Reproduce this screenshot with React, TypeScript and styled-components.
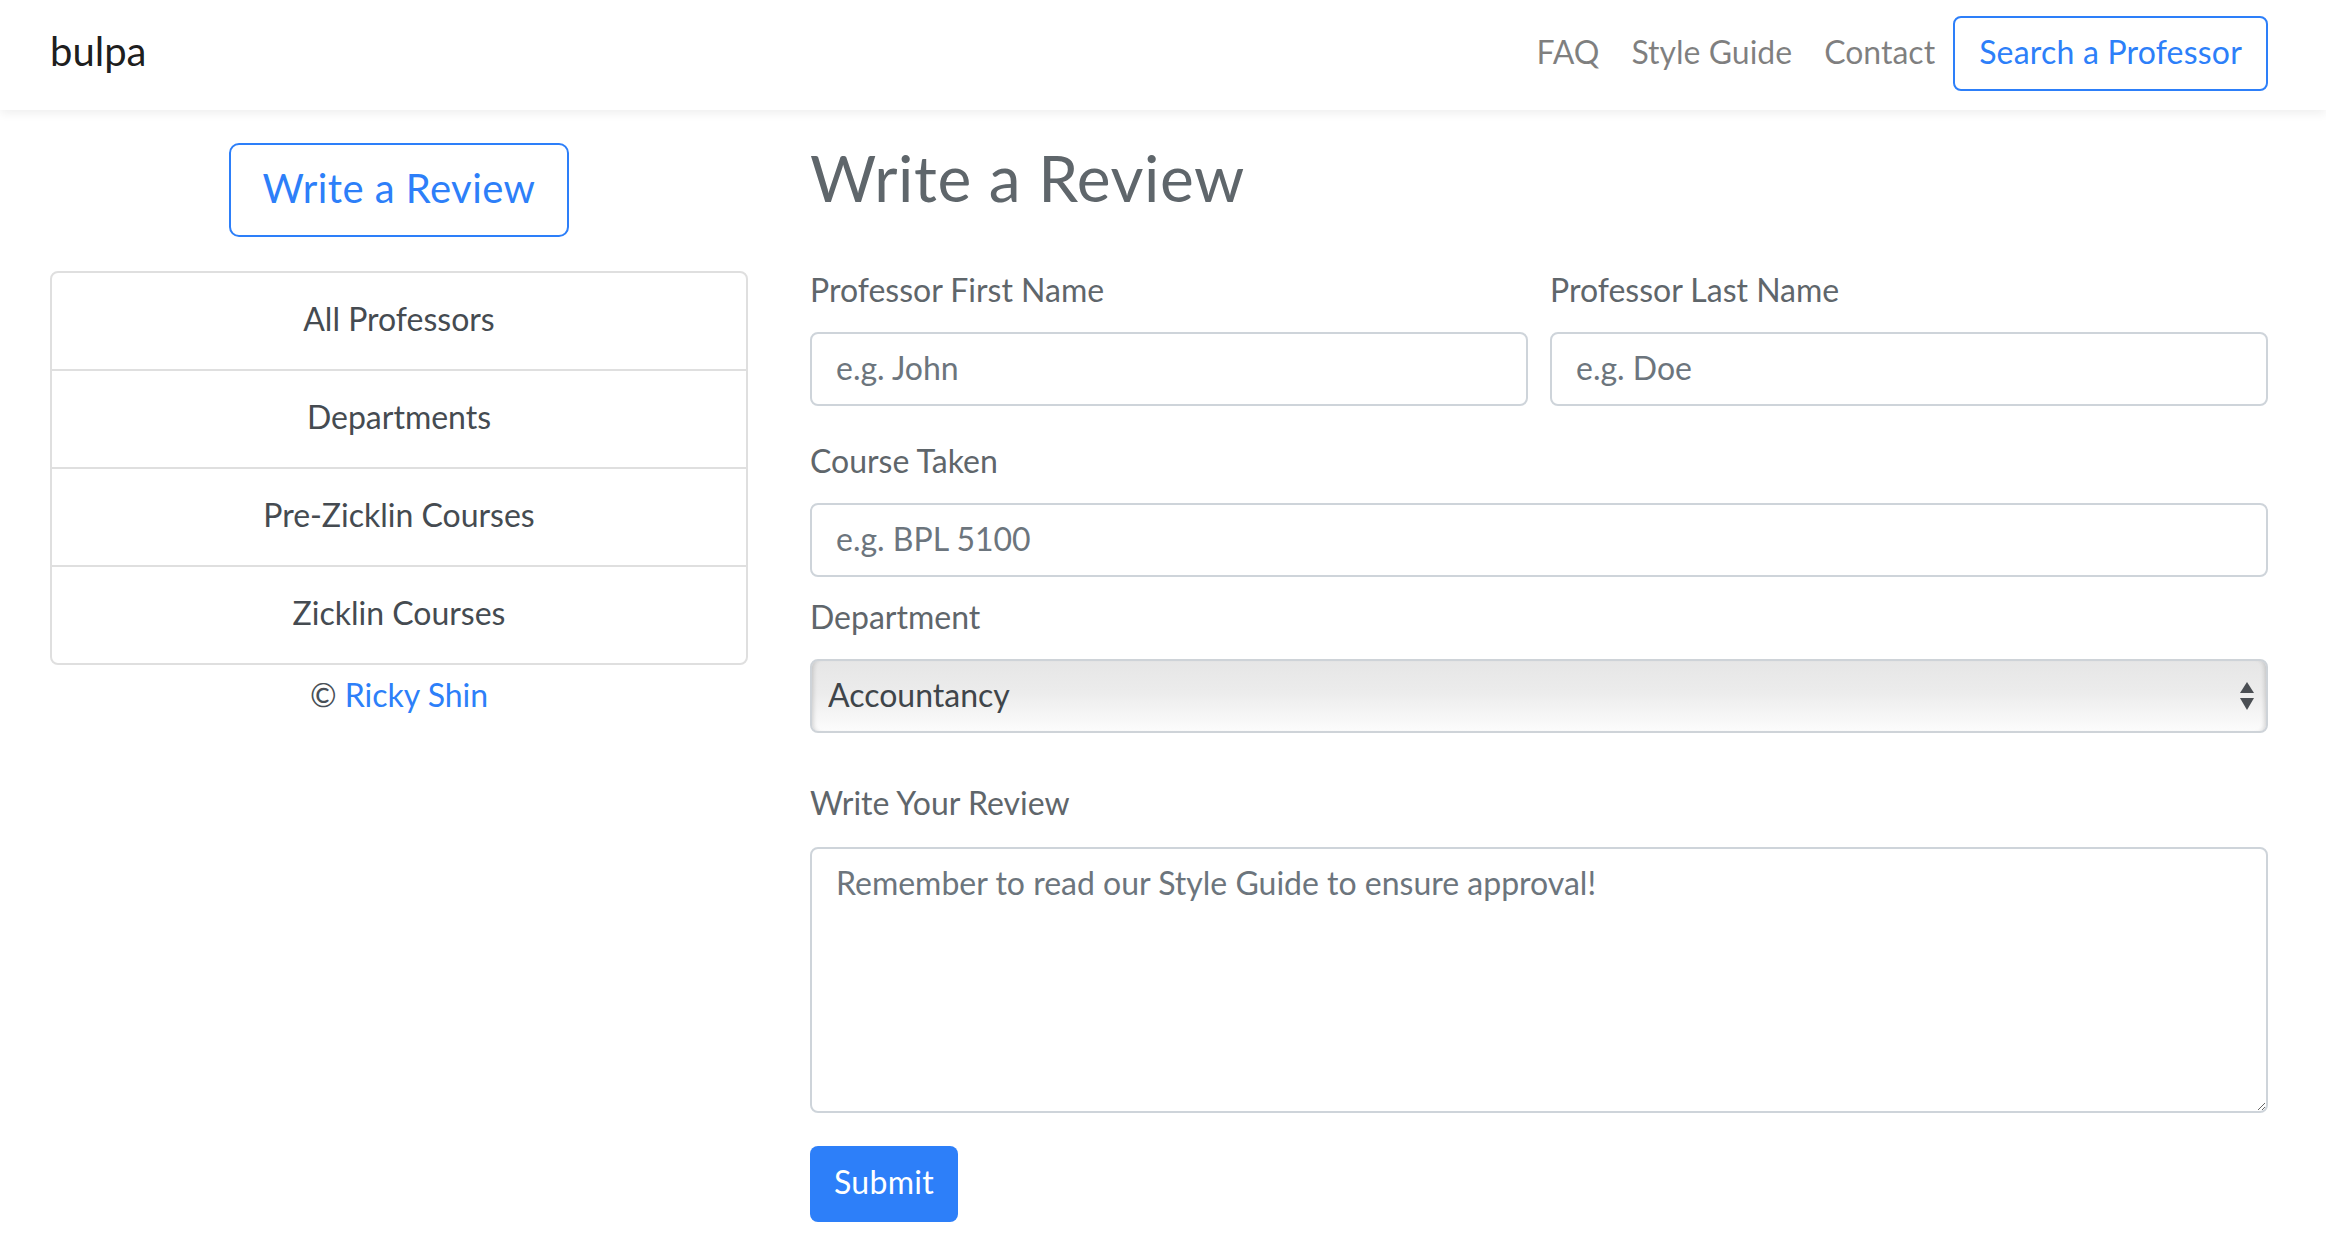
import React from "react";
import styled, { createGlobalStyle } from "styled-components";

const BLUE = "#2d7ff9";
const FONT = `"Lato", "Noto Sans", sans-serif`;

const GlobalStyle = createGlobalStyle`
  * { box-sizing: border-box; }
  body {
    margin: 0;
    background: #fff;
    font-family: ${FONT};
    font-size: 32px;
    line-height: 48px;
    color: #212529;
  }
`;

const NAV_LINKS = ["FAQ", "Style Guide", "Contact"];
const SIDE_LINKS = ["All Professors", "Departments", "Pre-Zicklin Courses", "Zicklin Courses"];

export default function App() {
  return (
    <>
      <GlobalStyle />
      <Navbar>
        <Brand>bulpa</Brand>
        <NavRight>
          {NAV_LINKS.map((l) => (
            <NavLink key={l}>{l}</NavLink>
          ))}
          <OutlineButton>Search a Professor</OutlineButton>
        </NavRight>
      </Navbar>
      <Main>
        <Sidebar>
          <LargeOutlineButton>Write a Review</LargeOutlineButton>
          <ListGroup>
            {SIDE_LINKS.map((l) => (
              <ListItem key={l}>{l}</ListItem>
            ))}
          </ListGroup>
          <Credit>
            © <CreditLink>Ricky Shin</CreditLink>
          </Credit>
        </Sidebar>
        <Content>
          <PageTitle>Write a Review</PageTitle>
          <FieldRow $mb={31}>
            <div>
              <FieldLabel>Professor First Name</FieldLabel>
              <TextInput placeholder="e.g. John" />
            </div>
            <div>
              <FieldLabel>Professor Last Name</FieldLabel>
              <TextInput placeholder="e.g. Doe" />
            </div>
          </FieldRow>
          <FieldGroup $mb={16}>
            <FieldLabel>Course Taken</FieldLabel>
            <TextInput placeholder="e.g. BPL 5100" />
          </FieldGroup>
          <FieldGroup $mb={46}>
            <FieldLabel>Department</FieldLabel>
            <SelectWrap>
              <Select defaultValue="Accountancy">
                <option>Accountancy</option>
                <option>Economics</option>
                <option>Finance</option>
                <option>Management</option>
                <option>Marketing</option>
              </Select>
              <SelectArrows width="14" height="28" viewBox="0 0 14 28">
                <path d="M7 0 L14 11 L0 11 Z" fill="#4a4e53" />
                <path d="M0 16 L14 16 L7 28 Z" fill="#4a4e53" />
              </SelectArrows>
            </SelectWrap>
          </FieldGroup>
          <FieldGroup $mb={33}>
            <FieldLabel $mb={20}>Write Your Review</FieldLabel>
            <TextArea placeholder="Remember to read our Style Guide to ensure approval!" />
          </FieldGroup>
          <SubmitButton>Submit</SubmitButton>
        </Content>
      </Main>
    </>
  );
}

const Navbar = styled.nav`
  position: relative;
  z-index: 2;
  height: 110px;
  padding: 16px 58px 19px 50px;
  display: flex;
  align-items: center;
  justify-content: space-between;
  background: #fff;
  box-shadow: 0 3px 10px rgba(0, 0, 0, 0.07);
`;

const Brand = styled.div`
  font-size: 40px;
  line-height: 60px;
  padding-bottom: 6px;
  color: rgba(0, 0, 0, 0.9);
`;

const NavRight = styled.div`
  display: flex;
  align-items: center;
`;

const NavLink = styled.a`
  padding: 0 16px 4px;
  font-size: 32px;
  line-height: 48px;
  color: rgba(0, 0, 0, 0.5);
  cursor: pointer;
`;

const OutlineButton = styled.button`
  margin-left: 2px;
  height: 75px;
  padding: 0 24px 4px;
  border: 2px solid ${BLUE};
  border-radius: 8px;
  background: #fff;
  color: ${BLUE};
  font-family: ${FONT};
  font-size: 32px;
  line-height: 48px;
  letter-spacing: 0.2px;
`;

const Main = styled.main`
  display: grid;
  grid-template-columns: 698px 1fr;
  column-gap: 62px;
  padding: 0 58px 0 50px;
`;

const Sidebar = styled.aside`
  display: flex;
  flex-direction: column;
  align-items: center;
  padding-top: 33px;
`;

const LargeOutlineButton = styled.button`
  height: 94px;
  padding: 0 32px 4px;
  border: 2px solid ${BLUE};
  border-radius: 10px;
  background: #fff;
  color: ${BLUE};
  font-family: ${FONT};
  font-size: 40px;
  line-height: 60px;
  letter-spacing: 0.45px;
  margin-bottom: 34px;
`;

const ListGroup = styled.div`
  align-self: stretch;
  border: 2px solid #dfdfdf;
  border-radius: 8px;
  display: flex;
  flex-direction: column;
`;

const ListItem = styled.a`
  padding: 22px 40px 26px;
  text-align: center;
  font-size: 32px;
  line-height: 48px;
  color: #454b51;
  cursor: pointer;

  & + & {
    border-top: 2px solid #dfdfdf;
  }
`;

const Credit = styled.div`
  margin-top: 6px;
  text-align: center;
  color: #495057;
`;

const CreditLink = styled.a`
  color: ${BLUE};
`;

const Content = styled.section`
  display: flex;
  flex-direction: column;
  align-items: stretch;
  padding-top: 2px;
`;

const PageTitle = styled.h1`
  margin: 27px 0 50px;
  font-size: 64px;
  font-weight: 400;
  line-height: 77px;
  letter-spacing: 0.6px;
  color: #5f666b;
`;

const FieldRow = styled.div<{ $mb: number }>`
  display: grid;
  grid-template-columns: 1fr 1fr;
  column-gap: 22px;
  margin-bottom: ${(p) => p.$mb}px;
`;

const FieldGroup = styled.div<{ $mb: number }>`
  display: flex;
  flex-direction: column;
  margin-bottom: ${(p) => p.$mb}px;
`;

const FieldLabel = styled.label<{ $mb?: number }>`
  display: block;
  margin-bottom: ${(p) => p.$mb ?? 18}px;
  font-size: 32px;
  line-height: 48px;
  color: #5f666b;
`;

const TextInput = styled.input`
  display: block;
  width: 100%;
  height: 74px;
  padding: 0 24px 3px;
  border: 2px solid #ced4da;
  border-radius: 8px;
  font-family: ${FONT};
  font-size: 32px;
  color: #495057;
  outline: none;

  &::placeholder {
    color: #6c757d;
  }
`;

const SelectWrap = styled.div`
  position: relative;
`;

const Select = styled.select`
  display: block;
  width: 100%;
  height: 74px;
  padding: 0 60px 3px 16px;
  appearance: none;
  border: 2px solid #ced3d8;
  border-radius: 8px;
  background: linear-gradient(#e6e6e6 0%, #ececec 45%, #fcfcfc 100%);
  box-shadow: inset 5px 0 5px -4px rgba(0, 0, 0, 0.18),
    inset -5px 0 5px -4px rgba(0, 0, 0, 0.18);
  font-family: ${FONT};
  font-size: 32px;
  color: #3f454a;
  outline: none;
`;

const SelectArrows = styled.svg`
  position: absolute;
  right: 14px;
  top: 50%;
  transform: translateY(-50%);
  pointer-events: none;
`;

const TextArea = styled.textarea`
  display: block;
  width: 100%;
  height: 266px;
  padding: 10px 24px;
  border: 2px solid #ced4da;
  border-radius: 8px;
  font-family: ${FONT};
  font-size: 32px;
  line-height: 48px;
  color: #495057;
  resize: vertical;
  outline: none;

  &::placeholder {
    color: #6c757d;
  }
`;

const SubmitButton = styled.button`
  align-self: flex-start;
  height: 76px;
  padding: 0 24px 4px;
  border: none;
  border-radius: 8px;
  background: ${BLUE};
  color: #fff;
  font-family: ${FONT};
  font-size: 32px;
  line-height: 48px;
  letter-spacing: 0.3px;
`;
